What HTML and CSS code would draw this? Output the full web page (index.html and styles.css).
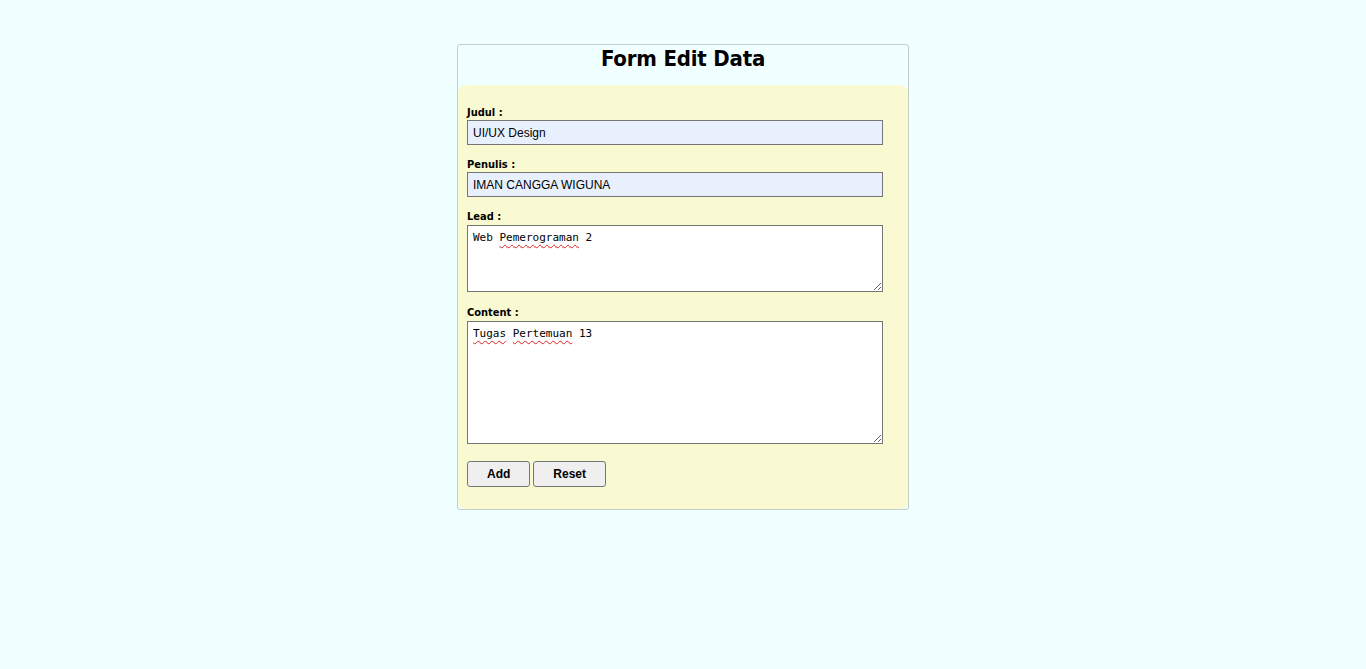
FILE: index.html
```html
<!DOCTYPE html>
<html lang="id">
<head>
<meta charset="utf-8">
<title>Form Edit Data</title>
<link rel="stylesheet" href="styles.css">
</head>
<body>
<div class="card">
  <div class="card-head">
    <h1 class="title">Form Edit Data</h1>
  </div>
  <form class="form">
    <div class="field">
      <label class="label" for="judul">Judul :</label>
      <input class="input" id="judul" type="text" value="UI/UX Design">
    </div>
    <div class="field">
      <label class="label" for="penulis">Penulis :</label>
      <input class="input" id="penulis" type="text" value="IMAN CANGGA WIGUNA">
    </div>
    <div class="field field-area">
      <label class="label">Lead :</label>
      <div class="area area-lead" contenteditable="true" role="textbox" aria-multiline="true">Web <span class="typo">Pemerograman</span> 2</div>
    </div>
    <div class="field field-area">
      <label class="label">Content :</label>
      <div class="area area-content" contenteditable="true" role="textbox" aria-multiline="true"><span class="typo">Tugas</span> <span class="typo">Pertemuan</span> 13</div>
    </div>
    <div class="actions">
      <button class="btn" type="button">Add</button>
      <button class="btn" type="reset">Reset</button>
    </div>
  </form>
</div>
</body>
</html>
```
FILE: styles.css
```css
html, body {
  margin: 0;
  padding: 0;
}
body {
  background: #f0ffff;
  font-family: "DejaVu Sans", Verdana, sans-serif;
  color: #000;
}
.card {
  width: 450px;
  margin: 44px auto 0;
  border: 1px solid #c4cccc;
  border-radius: 3px;
  background: #f0ffff;
}
.card-head {
  height: 40px;
  box-sizing: border-box;
  padding-top: 1px;
}
.title {
  margin: 0;
  text-align: center;
  font-size: 22px;
  line-height: 26px;
  font-weight: bold;
  font-stretch: condensed;
  letter-spacing: -0.2px;
}
.form {
  background: #fafad2;
  border-radius: 8px;
  padding: 21px 9px 22px 9px;
}
.field {
  margin-bottom: 13px;
}
.field-area {
  margin-bottom: 14px;
}
.label {
  display: block;
  font-size: 11px;
  line-height: 13px;
  font-weight: bold;
  font-stretch: condensed;
  margin-bottom: 1px;
}
.field-area .label {
  margin-bottom: 2px;
}
.input {
  display: block;
  box-sizing: border-box;
  width: 416px;
  height: 25px;
  margin: 0;
  padding: 0 5px;
  border: 1px solid #767676;
  border-radius: 0;
  background: #e8f0fe;
  font-family: "Liberation Sans", Arial, sans-serif;
  font-size: 12px;
  color: #000;
  outline: none;
}
.area {
  box-sizing: border-box;
  width: 416px;
  padding: 5px 5px;
  border: 1px solid #767676;
  background: #fff;
  font-family: "DejaVu Sans Mono", "Liberation Mono", monospace;
  font-size: 11px;
  line-height: 14px;
  color: #000;
  overflow: auto;
  resize: both;
  outline: none;
  white-space: pre-wrap;
}
.area-lead {
  height: 67px;
}
.area-content {
  height: 123px;
}
.typo {
  text-decoration: underline wavy #e02020;
  text-decoration-thickness: 1px;
  text-underline-offset: 3px;
}
.actions {
  display: flex;
  gap: 3px;
  padding-top: 3px;
}
.btn {
  margin: 0;
  padding: 5px 19px;
  height: 26px;
  box-sizing: border-box;
  border: 1px solid #767676;
  border-radius: 3px;
  background: #efefef;
  font-family: "Liberation Sans", Arial, sans-serif;
  font-size: 12px;
  line-height: 14px;
  font-weight: bold;
  color: #000;
}
```
